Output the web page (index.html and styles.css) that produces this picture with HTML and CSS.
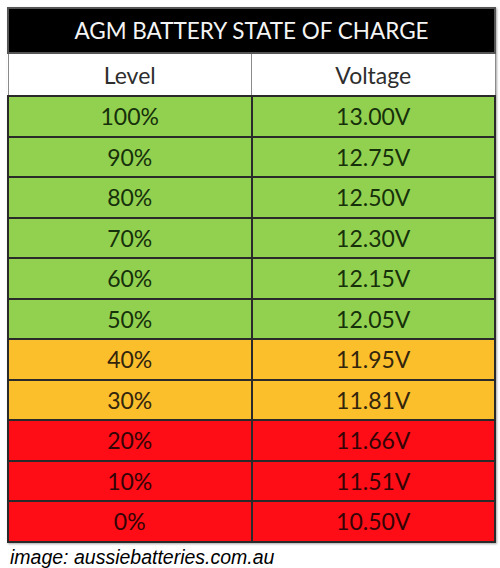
FILE: index.html
```html
<!DOCTYPE html>
<html lang="en">
<head>
    <meta charset="utf-8">
    <title>AGM Battery State of Charge</title>
    <link rel="stylesheet" href="styles.css">
</head>
<body>

<table class="chart">
    <tr class="title">
        <th colspan="2">AGM BATTERY STATE OF CHARGE</th>
    </tr>
    <tr class="head">
        <td>Level</td>
        <td>Voltage</td>
    </tr>
    <tr class="good"><td>100%</td><td>13.00V</td></tr>
    <tr class="good"><td>90%</td><td>12.75V</td></tr>
    <tr class="good"><td>80%</td><td>12.50V</td></tr>
    <tr class="good"><td>70%</td><td>12.30V</td></tr>
    <tr class="good"><td>60%</td><td>12.15V</td></tr>
    <tr class="good"><td>50%</td><td>12.05V</td></tr>
    <tr class="low"><td>40%</td><td>11.95V</td></tr>
    <tr class="low"><td>30%</td><td>11.81V</td></tr>
    <tr class="flat"><td>20%</td><td>11.66V</td></tr>
    <tr class="flat"><td>10%</td><td>11.51V</td></tr>
    <tr class="flat"><td>0%</td><td>10.50V</td></tr>
</table>

<p class="credit">image: aussiebatteries.com.au</p>

</body>
</html>
```

FILE: styles.css
```css
body {
    margin: 0;
    padding: 7px 0 0 7px;
    font-family: Lato, "Open Sans", sans-serif;
    background: #fff;
}
.chart {
    width: 489px;
    border-collapse: collapse;
    table-layout: fixed;
    box-shadow: 1px 1px 2px rgba(0, 0, 0, 0.35);
}
.chart th,
.chart td {
    padding: 0;
    text-align: center;
    font-weight: 400;
    font-size: 23px;
    border: 2px solid #2a2a2a;
}
.title th {
    height: 43px;
    background: #000;
    color: #f4f4f4;
    font-size: 22.5px;
    border-color: #555;
}
.head td {
    height: 41px;
    background: #fff;
    color: #2e2e2e;
    border: 1px solid #8a8a8a;
    border-bottom: 2px solid #2a2a2a;
}
.good td,
.low td,
.flat td {
    height: 38.5px;
}
.good td {
    background: #92d050;
    color: #16300a;
}
.low td {
    background: #fbbf2c;
    color: #33250c;
}
.flat td {
    background: #fe0d16;
    color: #330305;
}
.credit {
    margin: 3px 0 0 3px;
    font-family: "Liberation Sans", Arial, sans-serif;
    font-style: italic;
    font-size: 19.5px;
    color: #000;
}
```
